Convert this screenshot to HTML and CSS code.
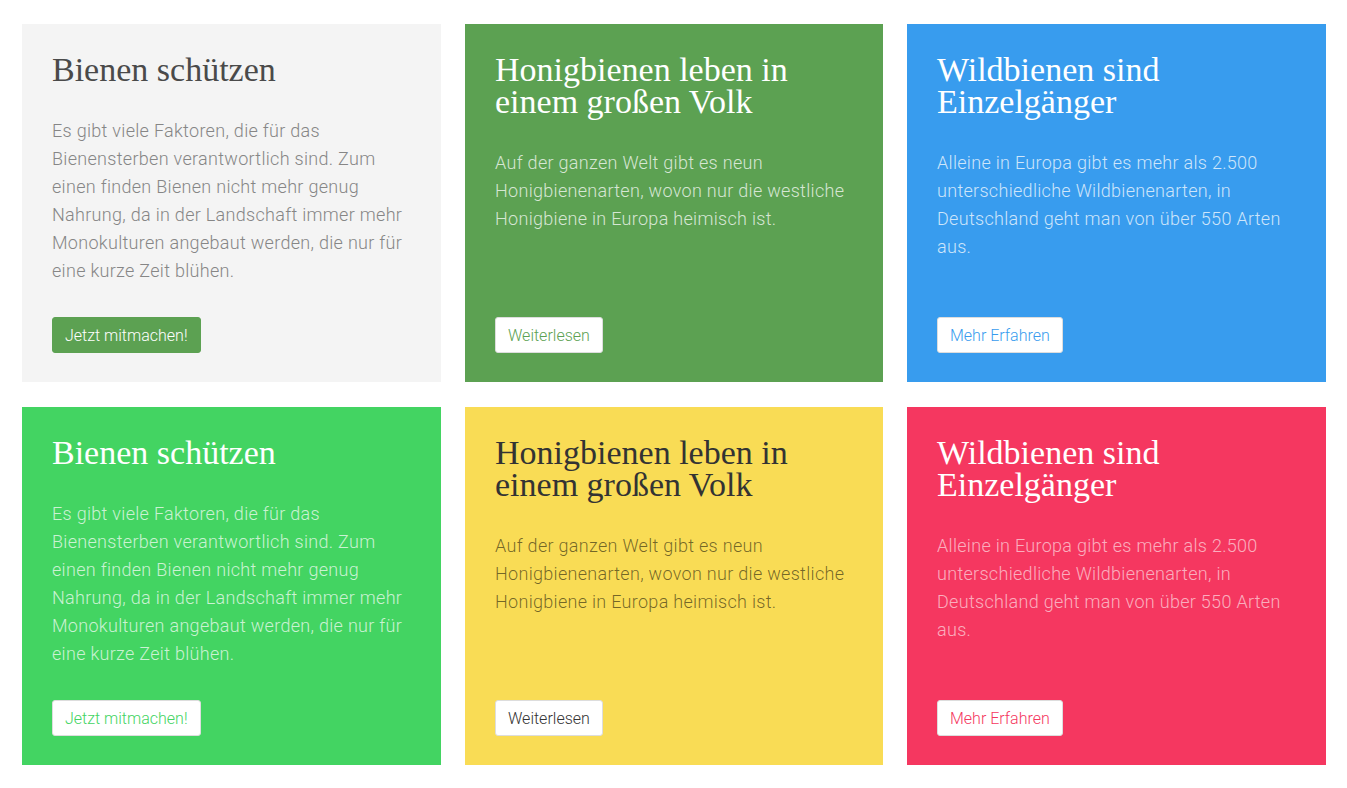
FILE: index.html
```html
<!DOCTYPE html>
<html lang="de">
<head>
<meta charset="utf-8">
<title>Bienen</title>
<link rel="stylesheet" href="styles.css">
</head>
<body>
<main class="grid">
  <section class="card card-grey">
    <h2 class="card-title">Bienen schützen</h2>
    <p class="card-text">Es gibt viele Faktoren, die für das Bienensterben verantwortlich sind. Zum einen finden Bienen nicht mehr genug Nahrung, da in der Landschaft immer mehr Monokulturen angebaut werden, die nur für eine kurze Zeit blühen.</p>
    <a class="btn btn-solid-green" href="#">Jetzt mitmachen!</a>
  </section>
  <section class="card card-green">
    <h2 class="card-title">Honigbienen leben in einem großen Volk</h2>
    <p class="card-text">Auf der ganzen Welt gibt es neun Honigbienenarten, wovon nur die westliche Honigbiene in Europa heimisch ist.</p>
    <a class="btn" href="#">Weiterlesen</a>
  </section>
  <section class="card card-blue">
    <h2 class="card-title">Wildbienen sind Einzelgänger</h2>
    <p class="card-text">Alleine in Europa gibt es mehr als 2.500 unterschiedliche Wildbienenarten, in Deutschland geht man von über 550 Arten aus.</p>
    <a class="btn" href="#">Mehr Erfahren</a>
  </section>
  <section class="card card-lime">
    <h2 class="card-title">Bienen schützen</h2>
    <p class="card-text">Es gibt viele Faktoren, die für das Bienensterben verantwortlich sind. Zum einen finden Bienen nicht mehr genug Nahrung, da in der Landschaft immer mehr Monokulturen angebaut werden, die nur für eine kurze Zeit blühen.</p>
    <a class="btn" href="#">Jetzt mitmachen!</a>
  </section>
  <section class="card card-yellow">
    <h2 class="card-title">Honigbienen leben in einem großen Volk</h2>
    <p class="card-text">Auf der ganzen Welt gibt es neun Honigbienenarten, wovon nur die westliche Honigbiene in Europa heimisch ist.</p>
    <a class="btn" href="#">Weiterlesen</a>
  </section>
  <section class="card card-pink">
    <h2 class="card-title">Wildbienen sind Einzelgänger</h2>
    <p class="card-text">Alleine in Europa gibt es mehr als 2.500 unterschiedliche Wildbienenarten, in Deutschland geht man von über 550 Arten aus.</p>
    <a class="btn" href="#">Mehr Erfahren</a>
  </section>
</main>
</body>
</html>
```

FILE: styles.css
```css
* { box-sizing: border-box; }

body {
  margin: 0;
  background: #ffffff;
  font-family: Roboto, "Liberation Sans", sans-serif;
}

.grid {
  display: grid;
  grid-template-columns: 419px 418px 419px;
  column-gap: 24px;
  row-gap: 25px;
  padding: 24px 21px 22px 22px;
}

.card {
  display: flex;
  flex-direction: column;
  align-items: flex-start;
  padding: 30px 30px 29px;
  min-height: 358px;
}

.card-title {
  margin: 0 0 31px;
  font-family: "Liberation Serif", "Times New Roman", serif;
  font-weight: 400;
  font-size: 34px;
  line-height: 32px;
  color: #ffffff;
}

.card-text {
  margin: 0 0 32px;
  font-weight: 300;
  font-size: 18px;
  line-height: 28px;
  letter-spacing: 0.3px;
}

.btn {
  margin-top: auto;
  display: inline-block;
  padding: 0 12px;
  height: 36px;
  line-height: 35px;
  font-size: 16px;
  font-weight: 300;
  text-decoration: none;
  background: #ffffff;
  border: 1px solid #dddddd;
  border-radius: 3px;
}

.card-grey { background: #f4f4f4; }
.card-grey .card-title { color: #4a4a4a; }
.card-grey .card-text { color: #868686; }
.btn-solid-green {
  background: #5ca152;
  border-color: #5ca152;
  color: #ffffff;
}

.card-green { background: #5ca152; }
.card-green .card-text { color: rgba(255, 255, 255, 0.75); }
.card-green .btn { color: #5ca152; }

.card-blue { background: #389cee; }
.card-blue .card-text { color: rgba(255, 255, 255, 0.75); }
.card-blue .btn { color: #389cee; }

.card-lime { background: #43d462; }
.card-lime .card-text { color: rgba(255, 255, 255, 0.72); }
.card-lime .btn { color: #43d462; }

.card-yellow { background: #f9dc55; }
.card-yellow .card-title { color: #333333; }
.card-yellow .card-text { color: rgba(0, 0, 0, 0.55); }
.card-yellow .btn { color: #333333; }

.card-pink { background: #f53760; }
.card-pink .card-text { color: rgba(255, 255, 255, 0.6); }
.card-pink .btn { color: #f53760; }
```
